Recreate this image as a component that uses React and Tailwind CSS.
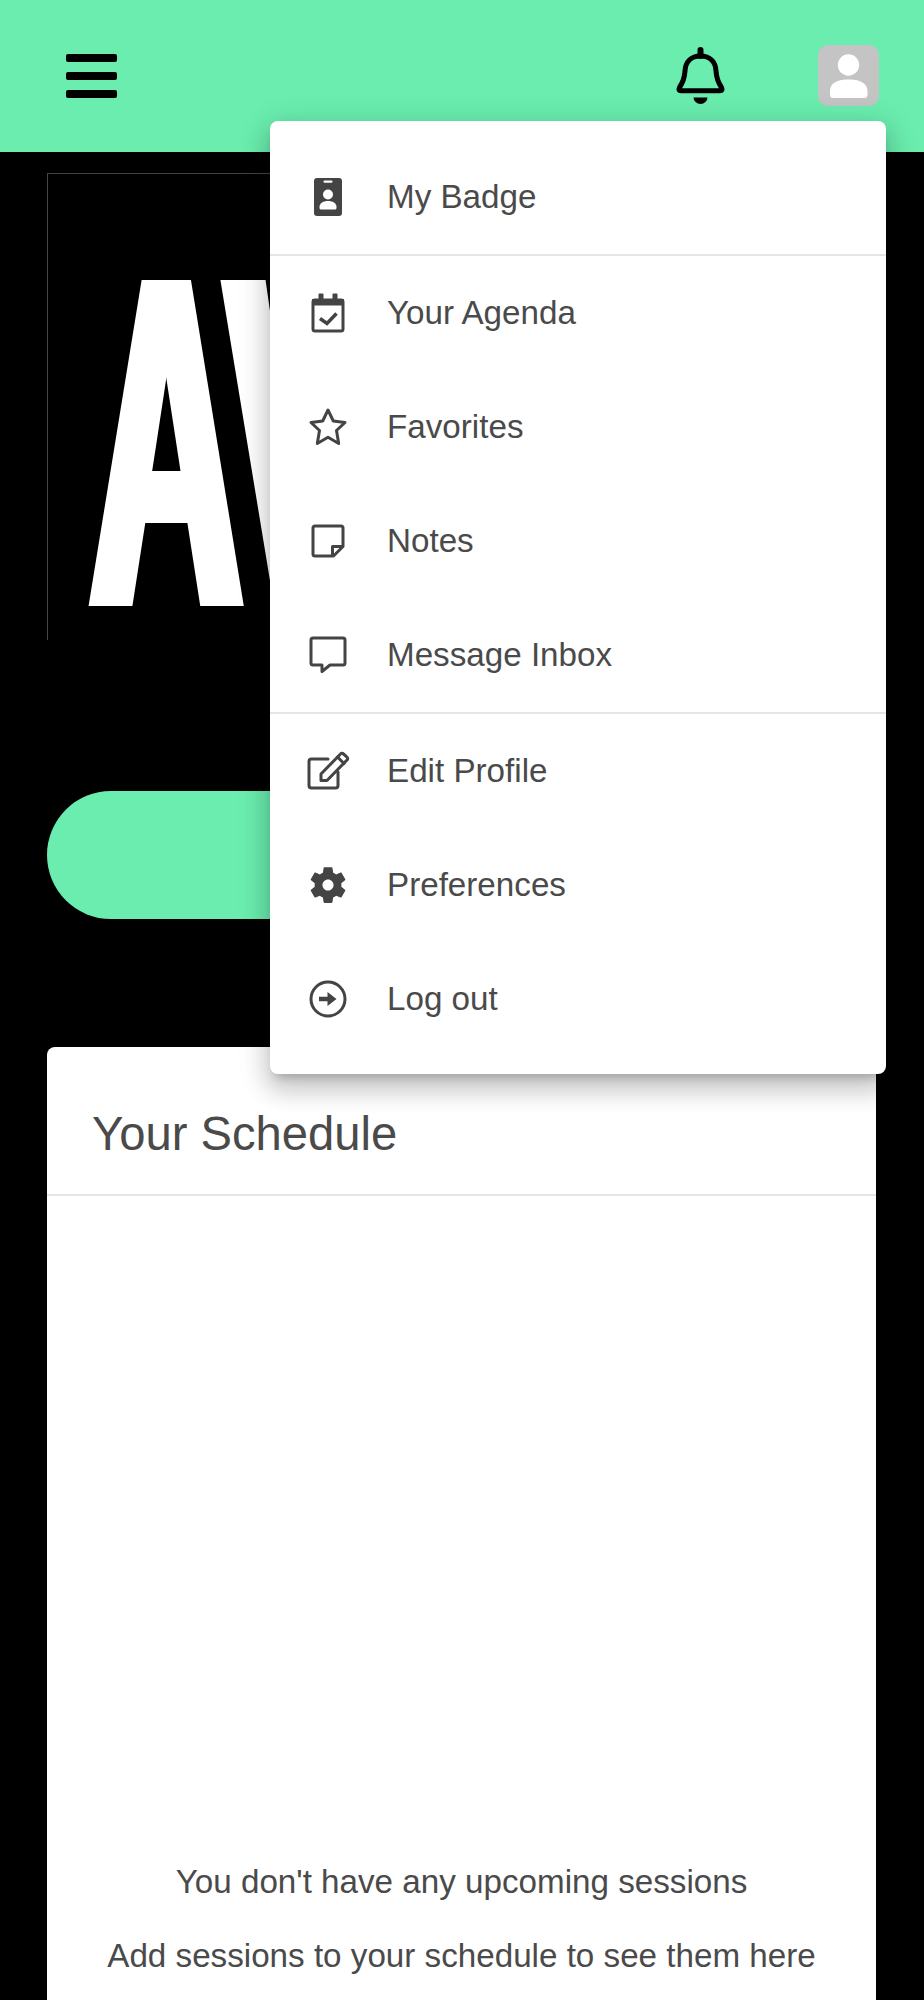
import React from 'react';

const menuGroups = [
  [{ label: 'My Badge', icon: 'badge' }],
  [
    { label: 'Your Agenda', icon: 'agenda' },
    { label: 'Favorites', icon: 'star' },
    { label: 'Notes', icon: 'note' },
    { label: 'Message Inbox', icon: 'message' },
  ],
  [
    { label: 'Edit Profile', icon: 'edit' },
    { label: 'Preferences', icon: 'gear' },
    { label: 'Log out', icon: 'logout' },
  ],
];

const MenuIcon = ({ name }) => {
  const line = { fill: 'none', stroke: '#444', strokeWidth: 3, strokeLinejoin: 'round', strokeLinecap: 'round' };
  return (
    <svg width="48" height="48" viewBox="0 0 48 48">
      {name === 'badge' && (
        <>
          <rect x="10" y="5" width="28" height="38" rx="3" fill="#444" />
          <rect x="19.5" y="7.5" width="9" height="2.2" rx="1" fill="#fff" />
          <circle cx="24" cy="21.5" r="5" fill="#fff" />
          <path d="M15.5 34c0-4 4-6 8.5-6s8.500 2 8.500 6v1a1.500 1.500 0 0 1-1.500 1.500H17a1.500 1.500 0 0 1-1.500-1.500z" fill="#fff" />
        </>
      )}
      {name === 'agenda' && (
        <>
          <rect x="9" y="11" width="30" height="31" rx="2" {...line} />
          <path d="M8 10h32v6.500H8z" fill="#444" />
          <rect x="14.500" y="4.500" width="5" height="8" rx="1" fill="#444" />
          <rect x="28.500" y="4.500" width="5" height="8" rx="1" fill="#444" />
          <path d="M16 29.500l7 5 9.500-10" {...line} strokeWidth="3.500" strokeLinecap="butt" strokeLinejoin="miter" />
        </>
      )}
      {name === 'star' && (
        <path d="M24 7l5.300 11L41 19.500l-8.500 8 2.200 13L24 34.300l-10.700 6.200 2.200-13-8.500-8L18.700 18z" {...line} />
      )}
      {name === 'note' && (
        <>
          <path d="M11 9h26a2 2 0 0 1 2 2v18.500L29.500 39H11a2 2 0 0 1-2-2V11a2 2 0 0 1 2-2z" {...line} />
          <path d="M28.500 38v-8.500H38" {...line} />
        </>
      )}
      {name === 'message' && (
        <path d="M9 7h30a2 2 0 0 1 2 2v23a2 2 0 0 1-2 2H26l-8 6.500V34H9a2 2 0 0 1-2-2V9a2 2 0 0 1 2-2z" {...line} />
      )}
      {name === 'edit' && (
        <>
          <path d="M24 12H7.500A2.500 2.500 0 0 0 5 14.500v24A2.500 2.500 0 0 0 7.500 41H31.500a2.500 2.500 0 0 0 2.500-2.500V25" {...line} />
          <path d="M17 33.500h6L43 13a2 2 0 0 0 0-3l-3.500-3a2 2 0 0 0-3 0L17 27z" {...line} />
          <path d="M33.500 10l6.500 6.500" {...line} />
        </>
      )}
      {name === 'gear' && (
        <g transform="translate(1.700 1.700) scale(1.860)">
          <path
            fill="#444"
            d="M19.140 12.940c.04-.3.06-.61.06-.94 0-.32-.02-.64-.07-.94l2.030-1.580c.18-.14.23-.41.12-.61l-1.920-3.320c-.12-.22-.37-.29-.59-.22l-2.390.96c-.5-.38-1.030-.7-1.620-.94l-.36-2.540c-.04-.24-.24-.41-.48-.41h-3.840c-.24 0-.43.17-.47.41l-.36 2.540c-.59.24-1.130.57-1.620.94l-2.390-.96c-.22-.08-.47 0-.59.22L2.740 8.870c-.12.21-.08.47.12.61l2.030 1.580c-.05.3-.09.63-.09.94s.02.64.07.94l-2.030 1.580c-.18.14-.23.41-.12.61l1.920 3.320c.12.22.37.29.59.22l2.390-.96c.5.38 1.030.7 1.620.94l.36 2.540c.05.24.24.41.48.41h3.840c.24 0 .44-.17.47-.41l.36-2.540c.59-.24 1.130-.56 1.620-.94l2.390.96c.22.08.47 0 .59-.22l1.920-3.320c.12-.22.07-.47-.12-.61l-2.010-1.580zM12 15c-1.650 0-3-1.350-3-3s1.350-3 3-3 3 1.350 3 3-1.350 3-3 3z"
          />
        </g>
      )}
      {name === 'logout' && (
        <>
          <circle cx="24" cy="24" r="17" {...line} />
          <path d="M15 21.800h8.500V17l9 7-9 7v-4.800H15z" fill="#444" />
        </>
      )}
    </svg>
  );
};

const App = () => {
  return (
    <div className="relative h-[2000px] overflow-hidden bg-black font-['Liberation_Sans',Arial,sans-serif] text-[#4a4a4a]">
      {/* Top bar */}
      <header className="flex h-[152px] items-center justify-between bg-[#6aedae] pb-[1px] pl-[66px] pr-[45px]">
        <div className="flex flex-col gap-[10px]">
          <div className="h-[8px] w-[51px] rounded-[2px] bg-black"></div>
          <div className="h-[8px] w-[51px] rounded-[2px] bg-black"></div>
          <div className="h-[8px] w-[51px] rounded-[2px] bg-black"></div>
        </div>
        <div className="flex items-center gap-[93px]">
          <svg width="49" height="58" viewBox="0 0 49 58">
            <path d="M24.500 3v6" fill="none" stroke="#000" strokeWidth="6" strokeLinecap="round" />
            <path
              d="M24.500 9C15 9 9.500 15 9 24 8.500 32 6.500 36 3.500 40.500 2.500 42.500 3 43.700 5 43.700h39c2 0 2.500-1.200 1.500-3.200C42.500 36 40.500 32 40 24 39.500 15 34 9 24.500 9z"
              fill="none"
              stroke="#000"
              strokeWidth="5"
              strokeLinejoin="round"
            />
            <path d="M17.500 50.500h14a7 6.500 0 0 1-14 0z" fill="#000" />
          </svg>
          <div className="h-[61px] w-[61px] rounded-[10px] bg-[#c4c4c4]">
            <svg width="61" height="61" viewBox="0 0 61 61">
              <circle cx="30.500" cy="20" r="10.700" fill="#fff" />
              <path d="M12 46c0-8 8-12 18.700-11.500C41 34 49.500 38 49.500 46v4a3 3 0 0 1-3 3H15a3 3 0 0 1-3-3z" fill="#fff" />
            </svg>
          </div>
        </div>
      </header>

      <main className="pl-[47px] pr-[48px] pt-[21px]">
        {/* Event logo */}
        <div className="h-[467px] border-l border-t border-[#444]">
          <div className="ml-[42px] mt-[31px] origin-top-left scale-x-[0.446] whitespace-nowrap text-[474px] font-bold leading-none tracking-[-3px] text-white [text-shadow:4px_0_#fff,-4px_0_#fff,8px_0_#fff,-8px_0_#fff,12px_0_#fff,-12px_0_#fff,15px_0_#fff,-15px_0_#fff]">
            AV
          </div>
        </div>

        <button className="mt-[151px] block h-[128px] w-full rounded-full bg-[#6aedae]"></button>

        {/* Schedule card */}
        <section className="mt-[128px] rounded-t-lg bg-white">
          <div className="flex h-[149px] items-center border-b-2 border-[#e5e5e5] px-[45px] pt-[27px]">
            <h2 className="text-[47.2px] font-normal">Your Schedule</h2>
          </div>
          <div className="flex flex-col items-center pb-[100px] pt-[662px] text-[33.2px] leading-[48px]">
            <p>You don't have any upcoming sessions</p>
            <p className="mt-[26px]">Add sessions to your schedule to see them here</p>
          </div>
        </section>
      </main>

      {/* Profile dropdown */}
      <div className="absolute left-[270px] top-[121px] w-[616px] rounded-lg bg-white pb-[18px] pt-[19px] shadow-[0_8px_10px_-5px_rgba(0,0,0,0.2),0_16px_24px_2px_rgba(0,0,0,0.14),0_6px_30px_5px_rgba(0,0,0,0.12)]">
        {menuGroups.map((group, i) => (
          <div key={i} className={i > 0 ? 'border-t-2 border-[#e5e5e5]' : ''}>
            {group.map((item) => (
              <div key={item.label} className="flex h-[114px] items-center">
                <div className="flex w-[117px] justify-center pr-[1px]">
                  <MenuIcon name={item.icon} />
                </div>
                <span className="text-[33.2px]">{item.label}</span>
              </div>
            ))}
          </div>
        ))}
      </div>
    </div>
  );
};

export default App;
